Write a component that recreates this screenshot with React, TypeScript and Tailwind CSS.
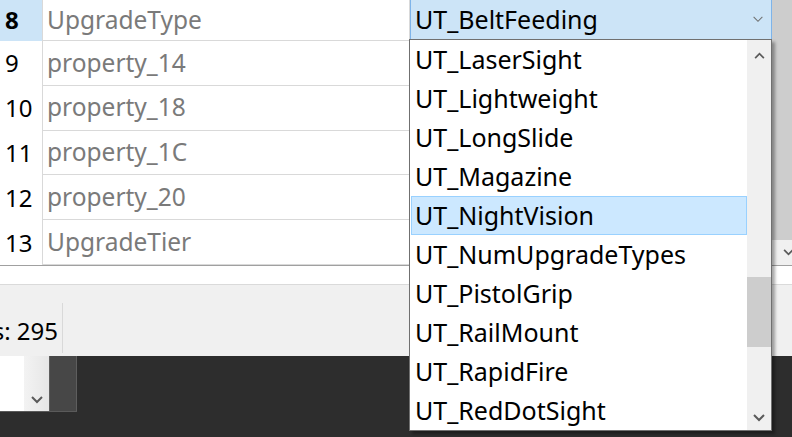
import React from 'react';

const rows = [
  { n: '8', name: 'UpgradeType', sel: true },
  { n: '9', name: 'property_14' },
  { n: '10', name: 'property_18' },
  { n: '11', name: 'property_1C' },
  { n: '12', name: 'property_20' },
  { n: '13', name: 'UpgradeTier' },
];

const options = [
  'UT_LaserSight',
  'UT_Lightweight',
  'UT_LongSlide',
  'UT_Magazine',
  'UT_NightVision',
  'UT_NumUpgradeTypes',
  'UT_PistolGrip',
  'UT_RailMount',
  'UT_RapidFire',
  'UT_RedDotSight',
];

const font = { fontFamily: '"Noto Sans", "Open Sans", sans-serif' };

function Chevron({ up = false, thin = false, className = '' }: { up?: boolean; thin?: boolean; className?: string }) {
  return (
    <svg viewBox="0 0 12 8" className={className} fill="none">
      <path
        d={up ? 'M1 7 L6 2 L11 7' : 'M1 1 L6 6 L11 1'}
        stroke={thin ? '#707070' : '#5a5a5a'}
        strokeWidth={thin ? 1.2 : 2}
      />
    </svg>
  );
}

export default function App() {
  return (
    <div className="relative w-[792px] h-[437px] overflow-hidden bg-[#2d2d2d] text-black" style={font}>
      {/* grid */}
      <div className="flex h-[266px] bg-white border-b border-[#a0a0a0]">
        <div className="w-[772px] flex flex-col">
          {rows.map((r, i) => (
            <div key={r.n} className={`flex ${i === 0 ? 'h-[41px]' : 'h-[45px]'}`}>
              <div
                className={`w-[42px] shrink-0 flex items-center pl-[5px] text-[24px] leading-none ${r.sel ? 'bg-[#cce4f7] font-bold' : ''}`}
              >
                {r.n}
              </div>
              <div className="w-[367px] shrink-0 flex items-center pl-[4px] border-l border-b border-[#d9d9d9] text-[24.5px] text-[#7a7a7a] leading-none">
                {r.name}
              </div>
              <div className="flex-1 border-l border-b border-[#d9d9d9]">
                {r.sel && (
                  <div className="h-[39px] bg-[#cce4f7] border-x border-[#7eb4ea] flex items-center justify-between pl-[4px] pr-[7px]">
                    <span className="text-[25px] leading-none">UT_BeltFeeding</span>
                    <Chevron thin className="w-[12px] h-[7px]" />
                  </div>
                )}
              </div>
            </div>
          ))}
        </div>
        <div className="w-[20px] flex flex-col bg-[#f0f0f0]">
          <div className="h-[240px] bg-[#cdcdcd]" />
          <div className="flex-1 flex items-center justify-end">
            <Chevron className="w-[11px] h-[7px] -mr-[2px]" />
          </div>
        </div>
      </div>

      <div className="h-[19px] bg-white border-b border-[#dadada]" />

      {/* status bar */}
      <div className="h-[71px] bg-[#f0f0f0] flex">
        <div className="w-[62px] self-end mb-[13px] flex justify-end overflow-hidden whitespace-nowrap text-[24px] leading-none pr-[4px]">
          Rows: 295
        </div>
        <div className="w-px h-[50px] bg-[#d9d9d9] self-end mb-[3px]" />
      </div>

      {/* lower dark area */}
      <div className="flex">
        <div className="flex h-[56px] border-b border-[#5a5a5a]">
          <div className="w-[24px] bg-white" />
          <div className="w-[25px] bg-gradient-to-r from-[#f3f3f3] to-[#e6e6e6] flex items-end justify-center pb-[7px]">
            <Chevron className="w-[12px] h-[8px]" />
          </div>
          <div className="w-[28px] bg-[#474747] border-l border-r border-[#5e5e5e]" />
        </div>
      </div>

      {/* open dropdown list */}
      <div className="absolute left-[409px] top-[39px] w-[363px] h-[392px] bg-white border border-[#707070] shadow-[3px_3px_3px_rgba(0,0,0,0.35)] flex">
        <div className="flex-1 flex flex-col pl-[1px]">
          {options.map((o) => (
            <div
              key={o}
              className={`h-[39px] shrink-0 flex items-center pl-[3px] text-[25px] leading-none border ${o === 'UT_NightVision' ? 'bg-[#cce8ff] border-[#99d1ff]' : 'border-transparent'}`}
            >
              {o}
            </div>
          ))}
        </div>
        <div className="w-[24px] bg-[#f0f0f0] flex flex-col">
          <div className="h-[28px] flex items-center justify-center pt-[2px]">
            <Chevron up className="w-[11px] h-[7px]" />
          </div>
          <div className="h-[209px]" />
          <div className="h-[70px] bg-[#cdcdcd]" />
          <div className="flex-1 flex items-end justify-center pb-[8px]">
            <Chevron className="w-[12px] h-[8px]" />
          </div>
        </div>
      </div>
    </div>
  );
}
